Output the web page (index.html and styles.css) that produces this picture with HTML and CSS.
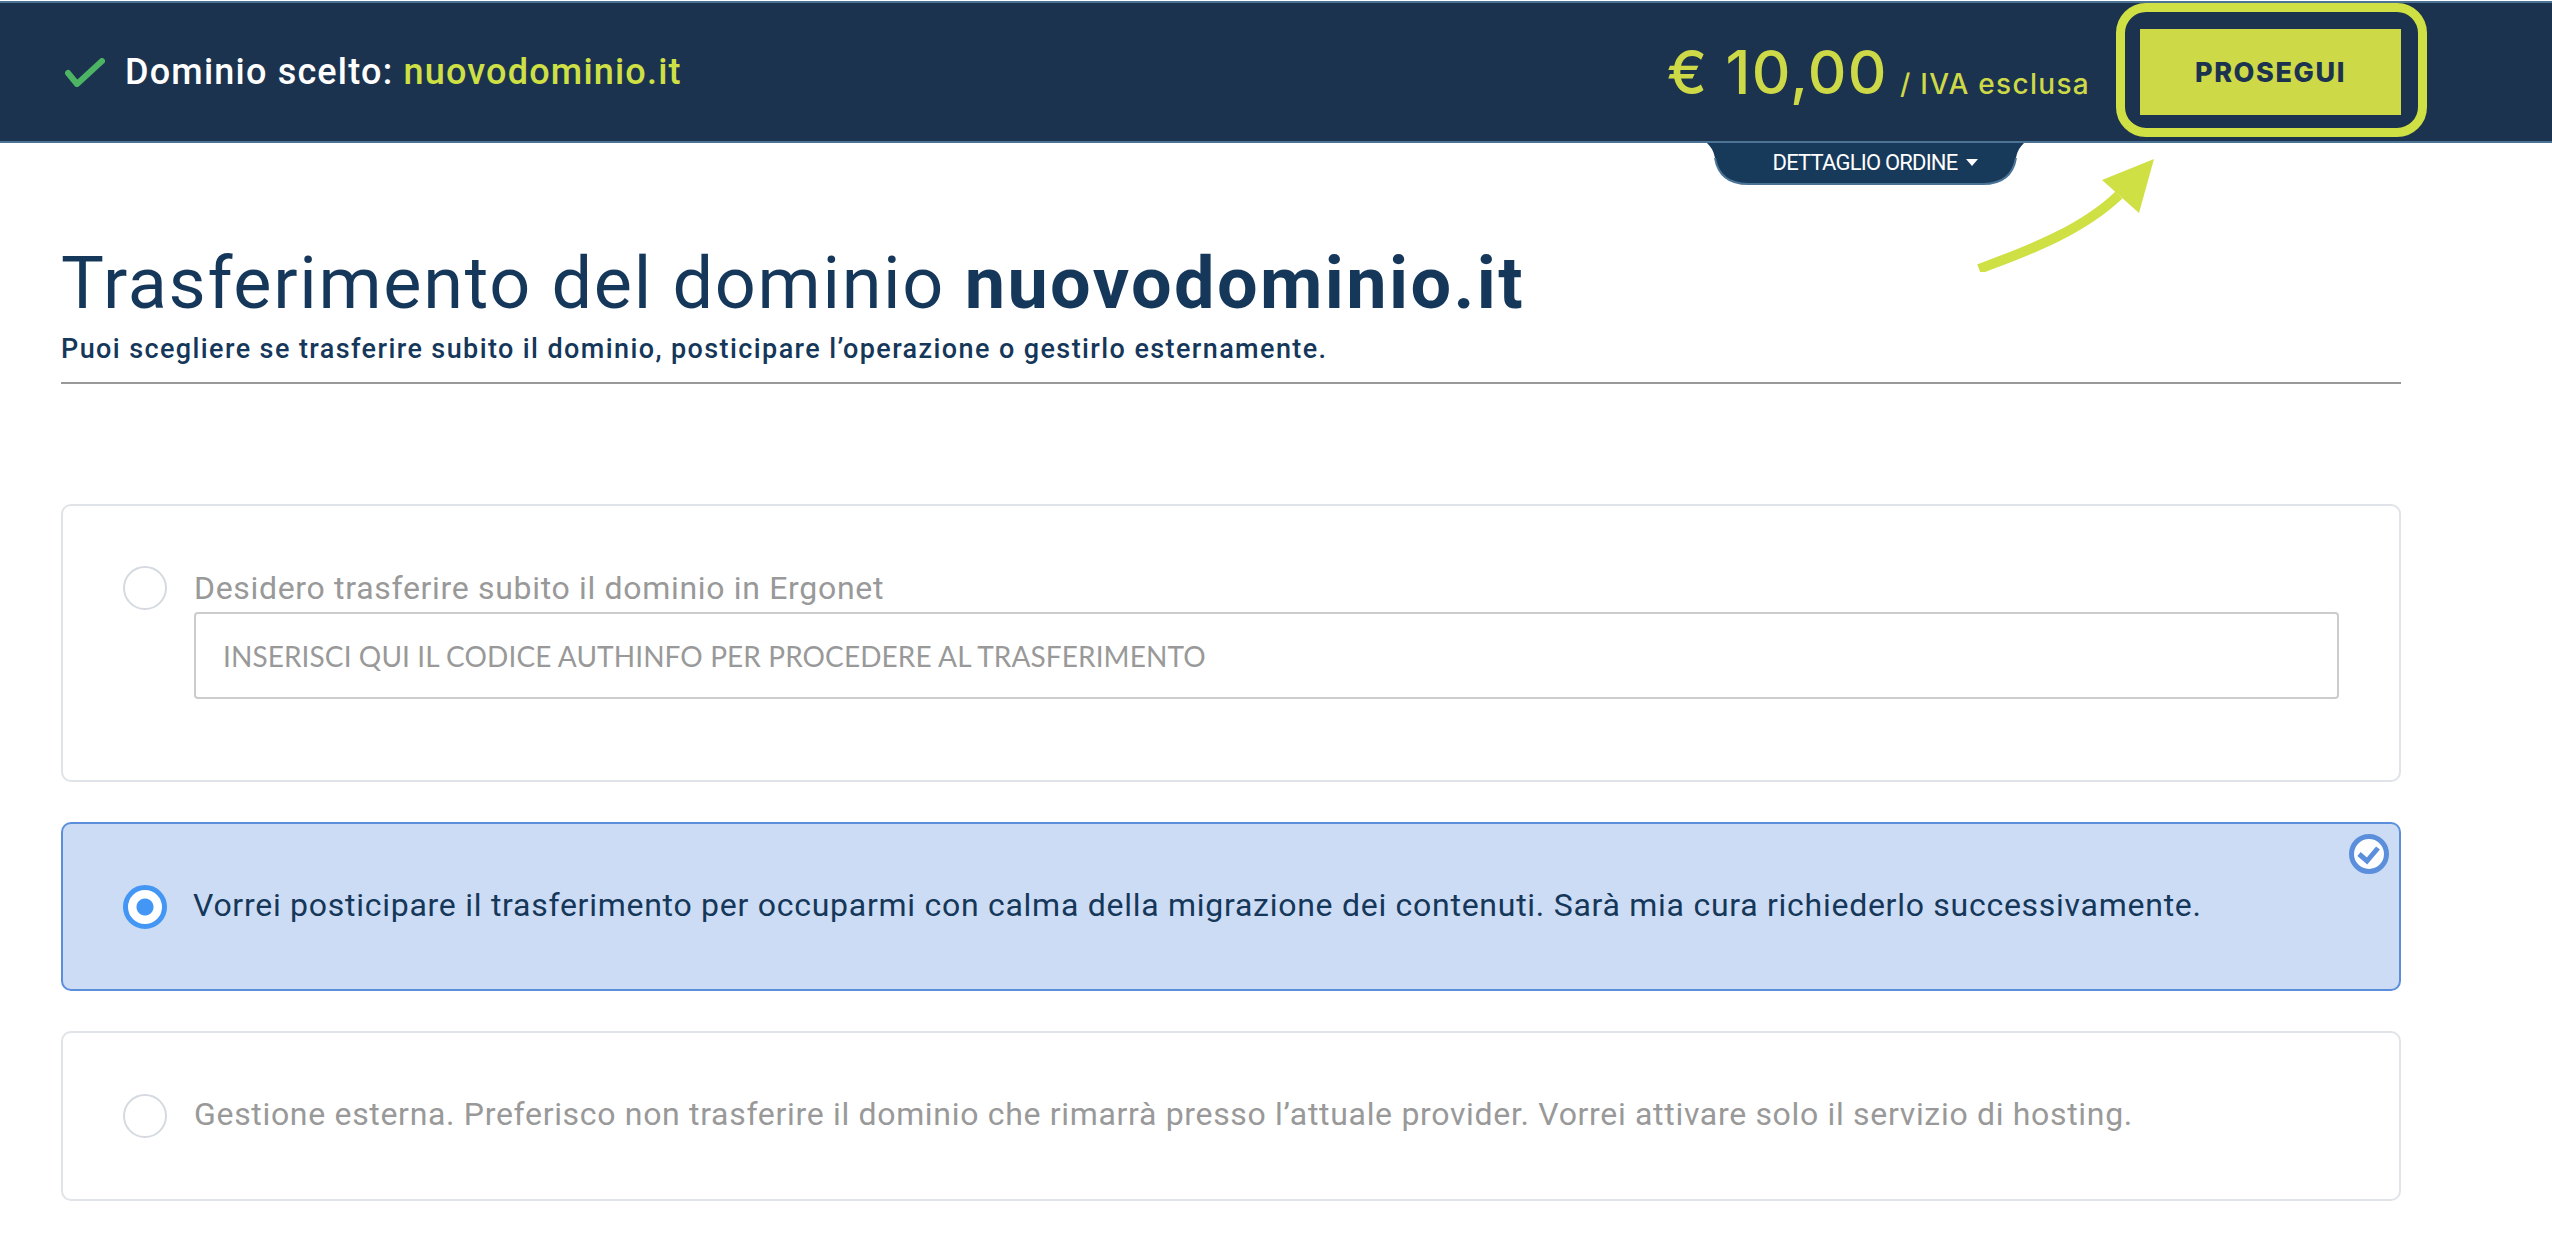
FILE: index.html
```html
<!DOCTYPE html>
<html>

<head>
  <title>Trasferimento del dominio</title>
  <link rel="stylesheet" href="styles.css">
</head>

<body>
  <header class="topbar">
    <div class="chosen">
      <svg class="chosen-check" viewBox="0 0 40 29" width="40" height="29">
        <path d="M3 15 L12 26 L37 3" fill="none" stroke="#4cb463" stroke-width="6" stroke-linecap="round" stroke-linejoin="round" />
      </svg>
      <span>Dominio scelto: <span class="lime">nuovodominio.it</span></span>
    </div>
    <div class="order">
      <div class="price"><span class="price-value">€ 10,00</span> <span class="price-note">/ IVA esclusa</span></div>
      <button class="next-button">PROSEGUI</button>
    </div>
    <div class="detail-tab">
      <svg class="tab-shape" viewBox="0 0 317 43" width="317" height="43">
        <path d="M0 0 H317 C311 6 310 10 309 15 C306 32 296 41 276 41 H41 C21 41 11 32 8 15 C7 10 6 6 0 0 Z" fill="#17395a" />
        <path d="M309 15 C306 32 296 41 276 41 H41 C21 41 11 32 8 15" fill="none" stroke="#4a7396" stroke-width="2" />
      </svg>
      <span class="tab-text">DETTAGLIO ORDINE</span>
      <span class="caret"></span>
    </div>
    <div class="highlight"></div>
  </header>

  <svg class="arrow" viewBox="0 0 180 115" width="180" height="115">
    <path d="M2 112 C38 98 100 78 142 38" fill="none" stroke="#cfe044" stroke-width="10" />
    <path d="M177 2 L125 23 L162 56 Z" fill="#cfe044" />
  </svg>

  <main class="content">
    <h1>Trasferimento del dominio <b>nuovodominio.it</b></h1>
    <p class="subtitle">Puoi scegliere se trasferire subito il dominio, posticipare l’operazione o gestirlo esternamente.</p>

    <section class="options">
      <div class="option option-first">
        <span class="radio"></span>
        <div class="option-body">
          <div class="option-label">Desidero trasferire subito il dominio in Ergonet</div>
          <input class="code-input" type="text" placeholder="INSERISCI QUI IL CODICE AUTHINFO PER PROCEDERE AL TRASFERIMENTO">
        </div>
      </div>

      <div class="option selected">
        <span class="radio"></span>
        <div class="option-body">
          <div class="option-label">Vorrei posticipare il trasferimento per occuparmi con calma della migrazione dei contenuti. Sarà mia cura richiederlo successivamente.</div>
        </div>
        <svg class="selected-mark" viewBox="0 0 40 40" width="40" height="40">
          <circle cx="20" cy="20" r="17.5" fill="#fff" stroke="#5b8fdc" stroke-width="5" />
          <path d="M10 20 L18 27 L29 14" fill="none" stroke="#5b8fdc" stroke-width="5" />
        </svg>
      </div>

      <div class="option">
        <span class="radio"></span>
        <div class="option-body">
          <div class="option-label">Gestione esterna. Preferisco non trasferire il dominio che rimarrà presso l’attuale provider. Vorrei attivare solo il servizio di hosting.</div>
        </div>
      </div>
    </section>
  </main>
</body>

</html>
```

FILE: styles.css
```css
* {
  box-sizing: border-box;
  margin: 0;
  padding: 0;
}

body {
  background-color: #fff;
  color: #15375a;
  font-family: 'Roboto', 'Noto Sans', sans-serif;
  padding-top: 1px;
  overflow: hidden;
}

.topbar {
  position: relative;
  display: flex;
  justify-content: space-between;
  align-items: center;
  height: 142px;
  padding: 0 151px 0 65px;
  background-color: #1c3350;
  border-top: 2px solid #4a7396;
  border-bottom: 2px solid #4a7396;
}

.chosen {
  display: flex;
  align-items: center;
  gap: 20px;
  color: #fff;
  font-size: 36px;
  font-weight: 500;
  letter-spacing: 1.2px;
}

.lime {
  color: #cfe044;
}

.order {
  display: flex;
  align-items: center;
  gap: 50px;
}

.price {
  color: #cdd946;
  font-family: 'Inter', sans-serif;
  font-weight: 500;
  white-space: nowrap;
}

.price-value {
  font-size: 60px;
  letter-spacing: 1.2px;
}

.price-note {
  font-size: 28px;
  letter-spacing: 1.3px;
  margin-left: 8px;
}

.next-button {
  width: 261px;
  height: 86px;
  background-color: #cdd946;
  border: none;
  color: #1c3350;
  font-family: 'Inter', sans-serif;
  font-size: 27px;
  font-weight: 800;
  letter-spacing: 1.6px;
}

.detail-tab {
  position: absolute;
  top: 140px;
  left: 1707px;
  width: 317px;
  height: 43px;
  display: flex;
  justify-content: center;
  align-items: center;
  gap: 9px;
  padding: 0 0 4px 20px;
  color: #fff;
  font-size: 22px;
  letter-spacing: -0.8px;
}

.tab-shape {
  position: absolute;
  top: 0;
  left: 0;
}

.tab-text {
  position: relative;
}

.caret {
  position: relative;
  border-left: 6px solid transparent;
  border-right: 6px solid transparent;
  border-top: 7px solid #fff;
}

.highlight {
  position: absolute;
  top: 0;
  left: 2116px;
  width: 311px;
  height: 134px;
  border: 9px solid #cfe044;
  border-radius: 30px;
}

.arrow {
  position: absolute;
  top: 157px;
  left: 1977px;
}

.content {
  width: 2401px;
  padding: 96px 0 0 61px;
}

h1 {
  font-size: 72px;
  font-weight: 400;
  letter-spacing: 1.7px;
  line-height: 90px;
}

h1 b {
  font-weight: 700;
  letter-spacing: 2.4px;
}

.subtitle {
  margin-top: 2px;
  font-size: 27px;
  font-weight: 500;
  letter-spacing: 1.4px;
  line-height: 36px;
  padding-bottom: 15px;
  border-bottom: 2px solid #999;
}

.options {
  display: flex;
  flex-direction: column;
  gap: 40px;
  margin-top: 120px;
}

.option {
  position: relative;
  display: flex;
  align-items: center;
  gap: 27px;
  height: 170px;
  padding: 0 60px;
  border: 2px solid #e0e4e8;
  border-radius: 10px;
  color: #999;
  font-size: 32px;
  letter-spacing: 0.68px;
}

.option-first {
  height: 278px;
  align-items: flex-start;
  padding-top: 60px;
}

.radio {
  flex: none;
  width: 44px;
  height: 44px;
  background-color: #fff;
  border: 2px solid #d5dae0;
  border-radius: 50%;
}

.option-body {
  flex: 1;
  padding-bottom: 4px;
}

.option-first .option-body {
  padding-bottom: 0;
}

.option-label {
  line-height: 44px;
}

.code-input {
  display: block;
  width: 100%;
  height: 87px;
  margin-top: 2px;
  padding: 0 27px;
  border: 2px solid #ccc;
  border-radius: 4px;
  font-family: 'Lato', sans-serif;
  font-size: 28px;
  letter-spacing: 0.1px;
}

.code-input::placeholder {
  color: #999;
}

.selected {
  gap: 26px;
  height: 169px;
  background-color: #ccdcf4;
  border-color: #5b8fdc;
  color: #15375a;
  letter-spacing: 0.73px;
}

.selected .radio {
  border: 5px solid #4496f5;
  background: radial-gradient(circle, #4496f5 8px, #fff 9px);
}

.selected-mark {
  position: absolute;
  top: 10px;
  right: 10px;
}
```
